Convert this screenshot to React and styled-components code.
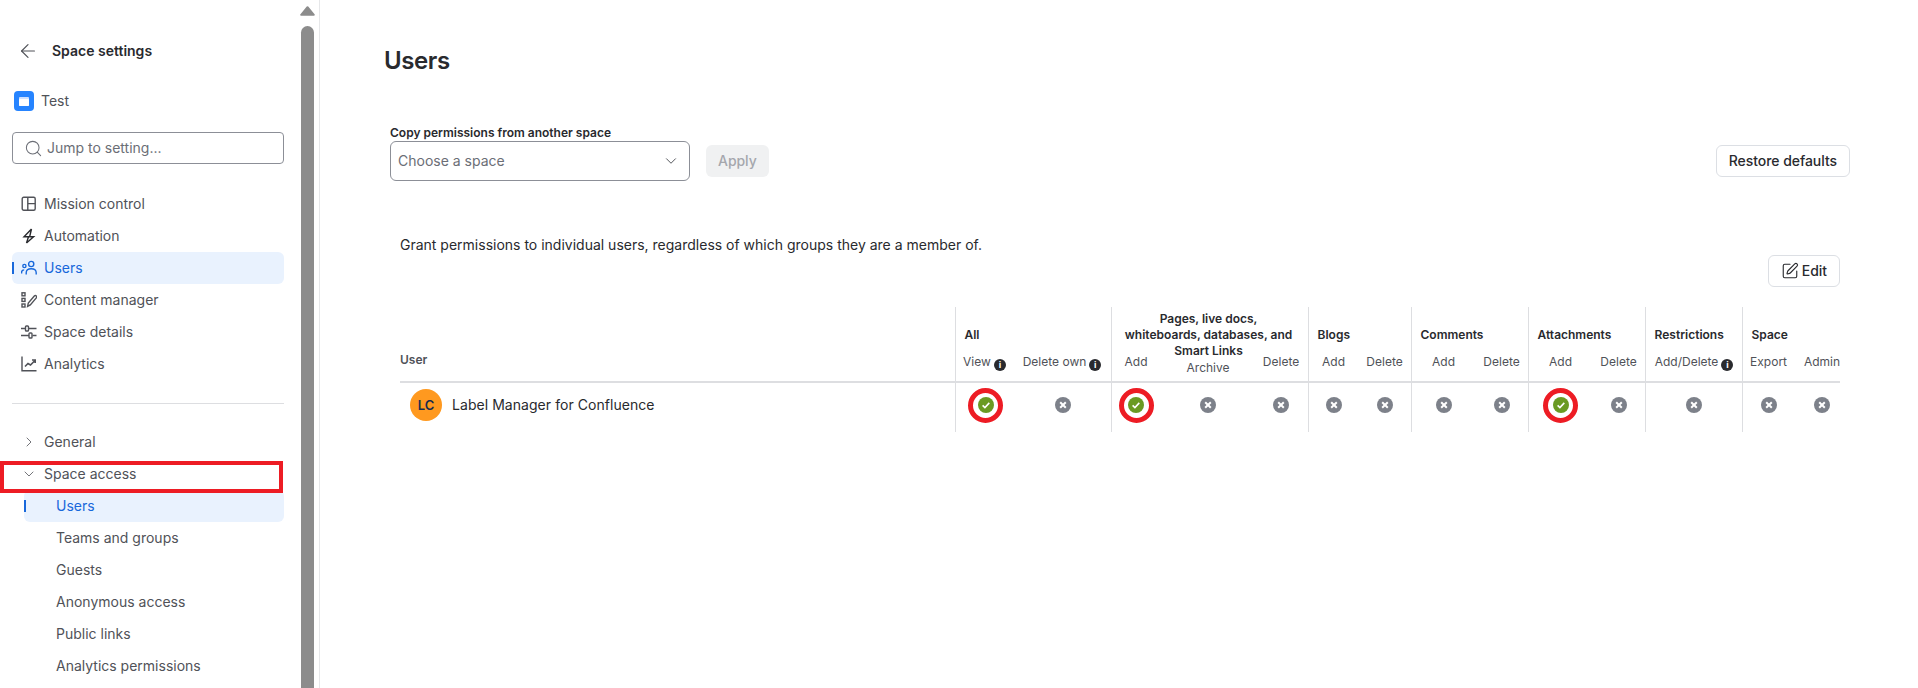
import styled, { createGlobalStyle } from 'styled-components';
import { ArrowLeft, ChevronDown, ChevronRight, Search, SquarePen } from 'lucide-react';

const GlobalStyle = createGlobalStyle`
  html, body {
    margin: 0;
    background: #fff;
    font-family: Inter, "Noto Sans", sans-serif;
    color: #292a2e;
  }
  * { box-sizing: border-box; }
`;

const Page = styled.div`
  display: flex;
  height: 688px;
  width: 1918px;
  overflow: hidden;
`;

/* sidebar */

const Sidebar = styled.aside`
  display: flex;
  flex: none;
  width: 320px;
  border-right: 1px solid #e6e7e9;
`;

const SidebarBody = styled.div`
  width: 301px;
  padding: 35px 17px 0 12px;
`;

const ScrollRail = styled.div`
  display: flex;
  flex-direction: column;
  width: 13px;
  padding-top: 6px;
`;

const ScrollArrow = styled.svg`
  display: block;
  width: 15px;
  height: 10px;
  margin-left: -1px;
  fill: #8c8c8c;
  stroke: #8c8c8c;
  stroke-width: 2;
  stroke-linejoin: round;
`;

const ScrollThumb = styled.div`
  flex: 1;
  width: 13px;
  margin-top: 10px;
  border-radius: 7px 7px 0 0;
  background: #8c8c8c;
`;

const SettingsHeader = styled.div`
  display: flex;
  align-items: center;
  gap: 13px;
  height: 32px;
  padding: 0 0 2px 5px;
  font-size: 14px;
  font-weight: 600;
  color: #292a2e;
  svg { color: #505258; margin-top: 2px; }
`;

const SpaceRow = styled.div`
  display: flex;
  align-items: center;
  gap: 7px;
  height: 20px;
  margin-top: 24px;
  padding: 0 0 2px 2px;
  font-size: 14px;
  color: #505258;
`;

const SpaceBadge = styled.span`
  display: flex;
  align-items: center;
  justify-content: center;
  width: 20px;
  height: 20px;
  margin-top: 2px;
  border-radius: 4px;
  background: #2684ff;
`;

const SearchBox = styled.div`
  display: flex;
  align-items: center;
  gap: 4px;
  height: 32px;
  margin-top: 21px;
  padding: 0 0 2px 11px;
  border: 1px solid #8c8f97;
  border-radius: 4px;
  font-size: 14px;
  color: #6b6e76;
  svg { color: #6b6e76; margin-top: 2px; }
`;

const NavList = styled.nav`
  margin-top: 24px;
`;

const NavItem = styled.div`
  position: relative;
  display: flex;
  align-items: center;
  gap: 7px;
  height: 32px;
  margin-left: ${({ $sub }) => ($sub ? '12px' : '0')};
  padding: 0 0 2px ${({ $sub }) => ($sub ? '32px' : '9px')};
  border-radius: 6px;
  font-size: 14px;
  color: ${({ $active }) => ($active ? '#1868db' : '#505258')};
  background: ${({ $active }) => ($active ? '#e9f2fe' : 'transparent')};

  &::before {
    content: '';
    display: ${({ $active }) => ($active ? 'block' : 'none')};
    position: absolute;
    left: 0;
    top: 10px;
    width: 2px;
    height: 12px;
    background: #1868db;
  }
`;

const NavIcon = styled.svg`
  flex: none;
  width: 16px;
  height: 16px;
  margin-top: 2px;
  fill: none;
  stroke: currentColor;
  stroke-width: 1.4;
`;

const TreeIcon = styled.span`
  display: flex;
  justify-content: center;
  width: 16px;
  margin-top: 2px;
  color: #505258;
`;

const Divider = styled.hr`
  height: 1px;
  margin: 23px 0 22px;
  border: 0;
  background: #dddee1;
`;

// red annotation drawn over the row by whoever took the screenshot
const Highlight = styled.span`
  position: absolute;
  z-index: 1;
  left: -12px;
  top: 3px;
  width: 283px;
  height: 32px;
  border: 4.5px solid #ed1c24;
  pointer-events: none;
`;

/* main */

const Main = styled.main`
  flex: 1;
  padding: 47px 68px 0 64px;
`;

const Title = styled.h1`
  margin: 0;
  font-size: 24px;
  line-height: 28px;
  font-weight: 600;
  letter-spacing: -0.4px;
  color: #292a2e;
`;

const CopyRow = styled.div`
  display: flex;
  align-items: flex-end;
  justify-content: space-between;
  margin: 50px 0 0 6px;
`;

const CopyLabel = styled.label`
  display: block;
  font-size: 12px;
  line-height: 16px;
  font-weight: 600;
  color: #292a2e;
`;

const CopyControls = styled.div`
  display: flex;
  align-items: center;
  gap: 16px;
`;

const SelectBox = styled.div`
  display: flex;
  align-items: center;
  justify-content: space-between;
  width: 300px;
  height: 40px;
  padding: 0 9px 2px 7px;
  border: 1px solid #8c8f97;
  border-radius: 6px;
  font-size: 14px;
  color: #6b6e76;
  svg { color: #505258; margin-top: 2px; }
`;

const Button = styled.button`
  display: flex;
  align-items: center;
  gap: 3px;
  height: 32px;
  padding: 0 12px 2px;
  border: ${({ disabled }) => (disabled ? '0' : '1px solid #dcdfe4')};
  border-radius: 6px;
  background: ${({ disabled }) => (disabled ? '#f0f1f2' : '#fff')};
  color: ${({ disabled }) => (disabled ? '#a5a7ad' : '#292a2e')};
  font-family: inherit;
  font-size: 14px;
  font-weight: 450;
  letter-spacing: -0.05px;
  svg { margin-top: 2px; }
`;

const RestoreWrap = styled.div`
  margin-bottom: 4px;
`;

const TableSection = styled.section`
  margin: 54px 10px 0 16px;
`;

const Intro = styled.p`
  margin: 0;
  font-size: 14px;
  line-height: 20px;
  color: #292a2e;
`;

const EditRow = styled.div`
  display: flex;
  justify-content: flex-end;
`;

const TableClip = styled.div`
  width: 1440px;
  margin-top: 20px;
  overflow: hidden;
`;

const Table = styled.table`
  width: 1448px;
  table-layout: fixed;
  border-collapse: separate;
  border-spacing: 0;
`;

const UserHead = styled.th`
  padding: 0 0 13px;
  vertical-align: bottom;
  text-align: left;
  font-size: 12px;
  line-height: 16px;
  font-weight: 600;
  color: #505258;
  border-bottom: 2px solid #dddee1;
`;

const GroupHead = styled.th`
  height: 47px;
  padding: ${({ $center }) => ($center ? '4px 3px 0 0' : '20px 0 0 8.5px')};
  vertical-align: top;
  text-align: ${({ $center }) => ($center ? 'center' : 'left')};
  font-size: 12px;
  line-height: 16px;
  font-weight: 600;
  color: #292a2e;
  white-space: nowrap;
  border-left: 1px solid #dddee1;
`;

// the long group title runs past its row, down into the labels under it
const GroupTitle = styled.div`
  height: 43px;
`;

const SubHead = styled.th`
  height: 29px;
  padding: ${({ $low }) => ($low ? '6px' : '0')} ${({ $pad }) => $pad}px 0 0;
  vertical-align: top;
  text-align: center;
  font-size: 12px;
  line-height: 16px;
  font-weight: 400;
  color: #505258;
  white-space: nowrap;
  border-bottom: 2px solid #dddee1;
  border-left: ${({ $first }) => ($first ? '1px solid #dddee1' : '0')};
`;

const InfoBadge = styled.span`
  display: inline-flex;
  align-items: center;
  justify-content: center;
  width: 12px;
  height: 12px;
  margin-left: 3px;
  vertical-align: -2px;
  border-radius: 50%;
  background: #292a2e;
  color: #fff;
  font-size: 9px;
  line-height: 12px;
  font-weight: 700;
`;

const UserCell = styled.td`
  height: 49px;
  padding: 0 0 5px 10px;
`;

const UserInfo = styled.div`
  display: flex;
  align-items: center;
  gap: 10px;
  font-size: 14px;
  letter-spacing: 0.05px;
  color: #292a2e;
`;

const UserName = styled.span`
  margin-bottom: 2px;
`;

const Avatar = styled.span`
  display: flex;
  align-items: center;
  justify-content: center;
  width: 32px;
  height: 32px;
  border-radius: 50%;
  background: #ff991f;
  font-size: 13px;
  font-weight: 600;
  color: #172b4d;
`;

const PermCell = styled.td`
  height: 49px;
  padding: 0 ${({ $pad }) => $pad}px 5px 0;
  vertical-align: middle;
  border-left: ${({ $first }) => ($first ? '1px solid #dddee1' : '0')};
`;

const StatusWrap = styled.span`
  position: relative;
  display: block;
  width: 16px;
  height: 16px;
  margin: 0 auto;
`;

const StatusDisc = styled.svg`
  display: block;
  width: 16px;
  height: 16px;
`;

const Ring = styled.span`
  position: absolute;
  left: -9.5px;
  top: -9.5px;
  width: 35px;
  height: 35px;
  border: 5px solid #ed1c24;
  border-radius: 50%;
`;

const Status = ({ on, ringed }) => (
  <StatusWrap>
    <StatusDisc viewBox="0 0 16 16">
      <circle cx="8" cy="8" r="8" fill={on ? '#6a9a23' : '#7d818a'} />
      {on ? (
        <path d="M4.6 8.3l2.3 2.2 4.4-4.6" fill="none" stroke="#fff" strokeWidth="1.6" />
      ) : (
        <path d="M5.2 5.2l5.6 5.6M10.8 5.2l-5.6 5.6" fill="none" stroke="#fff" strokeWidth="2" />
      )}
    </StatusDisc>
    {ringed && <Ring />}
  </StatusWrap>
);

const MissionIcon = () => (
  <NavIcon viewBox="0 0 16 16">
    <rect x="1.2" y="1.2" width="13" height="13" rx="1.5" />
    <path d="M6.8 1.2v13M6.8 7.6h7.4" />
  </NavIcon>
);

const BoltIcon = () => (
  <NavIcon viewBox="0 0 16 16" style={{ color: '#292a2e' }}>
    <path d="M10.5 1L3 8.8h9.6L5.5 15M10.5 1L8.6 8.8M5.5 15l2-6.2" />
  </NavIcon>
);

const PeopleIcon = () => (
  <NavIcon viewBox="0 0 16 16">
    <circle cx="10.2" cy="4" r="2.6" />
    <path d="M5.2 14.6v-1.8c0-2.4 2-4 5-4s5 1.6 5 4v1.8" />
    <circle cx="3.4" cy="6" r="1.6" />
    <path d="M.6 13.6v-1.4c0-1.4 1-2.3 2.6-2.3" />
  </NavIcon>
);

const ContentIcon = () => (
  <NavIcon viewBox="0 0 16 16">
    <rect x="1" y=".8" width="3" height="3" />
    <rect x="1" y="6.4" width="3" height="3" />
    <rect x="1" y="12" width="3" height="3" />
    <path d="M6.6 14.4l.7-3.4 6-7c.6-.6 1.4-.6 2 0s.5 1.3 0 1.9l-6 7z" />
  </NavIcon>
);

const SlidersIcon = () => (
  <NavIcon viewBox="0 0 16 16">
    <path d="M0 4.5h4.5M8 4.5h7.500M0 11.500h8M11.500 11.500h4" />
    <rect x="4.5" y="2" width="3" height="5" rx=".8" />
    <rect x="8" y="9" width="3" height="5" rx=".8" />
  </NavIcon>
);

const ChartIcon = () => (
  <NavIcon viewBox="0 0 16 16">
    <path d="M1 .5v14.3h14.5" />
    <path d="M4 10.5l3-3 2.5 1.5L14 4.500M11 4h3.200v3" strokeWidth="1.6" />
  </NavIcon>
);

const topNav = [
  { label: 'Mission control', Icon: MissionIcon },
  { label: 'Automation', Icon: BoltIcon },
  { label: 'Users', Icon: PeopleIcon, active: true },
  { label: 'Content manager', Icon: ContentIcon },
  { label: 'Space details', Icon: SlidersIcon },
  { label: 'Analytics', Icon: ChartIcon },
];

const subNav = ['Users', 'Teams and groups', 'Guests', 'Anonymous access', 'Public links', 'Analytics permissions'];

const groups = [
  { title: 'All', cols: [
    { label: 'View', width: 62, info: true, on: true },
    { label: 'Delete own', width: 94, info: true },
  ] },
  { title: ['Pages, live docs,', 'whiteboards, databases, and', 'Smart Links'], cols: [
    { label: 'Add', width: 51, on: true },
    { label: 'Archive', width: 94, low: true },
    { label: 'Delete', width: 52 },
  ] },
  { title: 'Blogs', cols: [{ label: 'Add', width: 52 }, { label: 'Delete', width: 51 }] },
  { title: 'Comments', cols: [{ label: 'Add', width: 66 }, { label: 'Delete', width: 51 }] },
  { title: 'Attachments', cols: [{ label: 'Add', width: 66, on: true }, { label: 'Delete', width: 51 }] },
  { title: 'Restrictions', cols: [{ label: 'Add/Delete', width: 97, info: true, pad: 0 }] },
  { title: 'Space', cols: [{ label: 'Export', width: 54 }, { label: 'Admin', width: 54 }] },
];

const PermissionTable = () => (
  <TableClip>
    <Table>
      <colgroup>
        <col style={{ width: 555 }} />
        {groups.flatMap((g) => g.cols).map((c, i) => (
          <col key={i} style={{ width: c.width }} />
        ))}
      </colgroup>
      <thead>
        <tr>
          <UserHead rowSpan={2}>User</UserHead>
          {groups.map((g, i) => {
            const long = Array.isArray(g.title);
            return (
              <GroupHead key={i} colSpan={g.cols.length} $center={long}>
                {long ? (
                  <GroupTitle>
                    {g.title.map((line) => (
                      <div key={line}>{line}</div>
                    ))}
                  </GroupTitle>
                ) : (
                  g.title
                )}
              </GroupHead>
            );
          })}
        </tr>
        <tr>
          {groups.flatMap((g) =>
            g.cols.map((c, i) => (
              <SubHead
                key={g.title + c.label}
                $first={i === 0}
                $low={c.low}
                $pad={(c.pad ?? 2) + (c.info && c.pad === undefined ? 2 : 0)}
              >
                {c.label}
                {c.info && <InfoBadge>i</InfoBadge>}
              </SubHead>
            ))
          )}
        </tr>
      </thead>
      <tbody>
        <tr>
          <UserCell>
            <UserInfo>
              <Avatar>LC</Avatar>
              <UserName>Label Manager for Confluence</UserName>
            </UserInfo>
          </UserCell>
          {groups.flatMap((g) =>
            g.cols.map((c, i) => (
              <PermCell key={g.title + c.label} $first={i === 0} $pad={c.pad ?? 2}>
                <Status on={c.on} ringed={c.on} />
              </PermCell>
            ))
          )}
        </tr>
      </tbody>
    </Table>
  </TableClip>
);

export default function App() {
  return (
    <Page>
      <GlobalStyle />
      <Sidebar>
        <SidebarBody>
          <SettingsHeader>
            <ArrowLeft size={22} strokeWidth={1.3} />
            Space settings
          </SettingsHeader>
          <SpaceRow>
            <SpaceBadge>
              <svg width="10" height="9" viewBox="0 0 10 9">
                <rect width="10" height="9" rx="1" fill="#cfe1ff" />
                <rect y="2" width="10" height="7" rx="1" fill="#fff" />
              </svg>
            </SpaceBadge>
            Test
          </SpaceRow>
          <SearchBox>
            <Search size={19} strokeWidth={1.3} />
            Jump to setting...
          </SearchBox>
          <NavList>
            {topNav.map(({ label, Icon, active }) => (
              <NavItem key={label} $active={active}>
                <Icon />
                {label}
              </NavItem>
            ))}
          </NavList>
          <Divider />
          <NavItem>
            <TreeIcon><ChevronRight size={20} strokeWidth={1.2} /></TreeIcon>
            General
          </NavItem>
          <NavItem>
            <TreeIcon><ChevronDown size={20} strokeWidth={1.2} /></TreeIcon>
            Space access
            <Highlight />
          </NavItem>
          {subNav.map((label, i) => (
            <NavItem key={label} $sub $active={i === 0}>
              {label}
            </NavItem>
          ))}
        </SidebarBody>
        <ScrollRail>
          <ScrollArrow viewBox="0 0 15 10">
            <path d="M7.5 1.2L1.2 8.8h12.6z" />
          </ScrollArrow>
          <ScrollThumb />
        </ScrollRail>
      </Sidebar>
      <Main>
        <Title>Users</Title>
        <CopyRow>
          <div>
            <CopyLabel>Copy permissions from another space</CopyLabel>
            <CopyControls>
              <SelectBox>
                Choose a space
                <ChevronDown size={18} strokeWidth={1.3} />
              </SelectBox>
              <Button disabled>Apply</Button>
            </CopyControls>
          </div>
          <RestoreWrap>
            <Button>Restore defaults</Button>
          </RestoreWrap>
        </CopyRow>
        <TableSection>
          <Intro>Grant permissions to individual users, regardless of which groups they are a member of.</Intro>
          <EditRow>
            <Button>
              <SquarePen size={18} strokeWidth={1.5} />
              Edit
            </Button>
          </EditRow>
          <PermissionTable />
        </TableSection>
      </Main>
    </Page>
  );
}
